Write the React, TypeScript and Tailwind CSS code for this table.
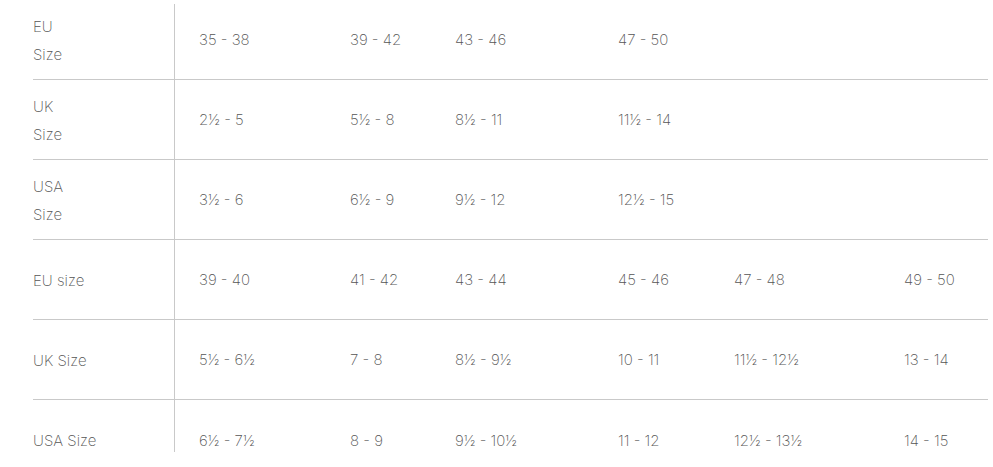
const rows: { label: string[]; values: string[] }[] = [
  { label: ["EU", "Size"], values: ["35 - 38", "39 - 42", "43 - 46", "47 - 50"] },
  { label: ["UK", "Size"], values: ["2½ - 5", "5½ - 8", "8½ - 11", "11½ - 14"] },
  { label: ["USA", "Size"], values: ["3½ - 6", "6½ - 9", "9½ - 12", "12½ - 15"] },
  { label: ["EU size"], values: ["39 - 40", "41 - 42", "43 - 44", "45 - 46", "47 - 48", "49 - 50"] },
  { label: ["UK Size"], values: ["5½ - 6½", "7 - 8", "8½ - 9½", "10 - 11", "11½ - 12½", "13 - 14"] },
  { label: ["USA Size"], values: ["6½ - 7½", "8 - 9", "9½ - 10½", "11 - 12", "12½ - 13½", "14 - 15"] },
];

export default function App() {
  return (
    <div
      className="h-[467px] w-[993px] bg-white pl-[33px] pr-[5px] text-[15px] font-extralight text-[#555]"
      style={{ fontFamily: "Inter, 'Noto Sans', sans-serif" }}
    >
      <div className="h-[452px] overflow-hidden">
        {rows.map((row, i) => (
          <div
            key={i}
            className={
              "grid h-[80px] grid-cols-[142px_175px_105px_163px_116px_170px_1fr] " +
              (i < rows.length - 1 ? "border-b border-[#c9c9c9]" : "")
            }
          >
            {/* label column */}
            <div
              className={
                "flex flex-col justify-center border-r border-[#c9c9c9] leading-[28px] " +
                (i === 0 ? "mt-[4px] pb-[2px]" : "pt-[2px]")
              }
            >
              {row.label.map((l) => (
                <span key={l}>{l}</span>
              ))}
            </div>
            {row.values.map((v, j) => (
              <div key={j} className={"flex items-center pt-[2px] " + (j === 0 ? "pl-[24px]" : "")}>
                {v}
              </div>
            ))}
          </div>
        ))}
      </div>
    </div>
  );
}
